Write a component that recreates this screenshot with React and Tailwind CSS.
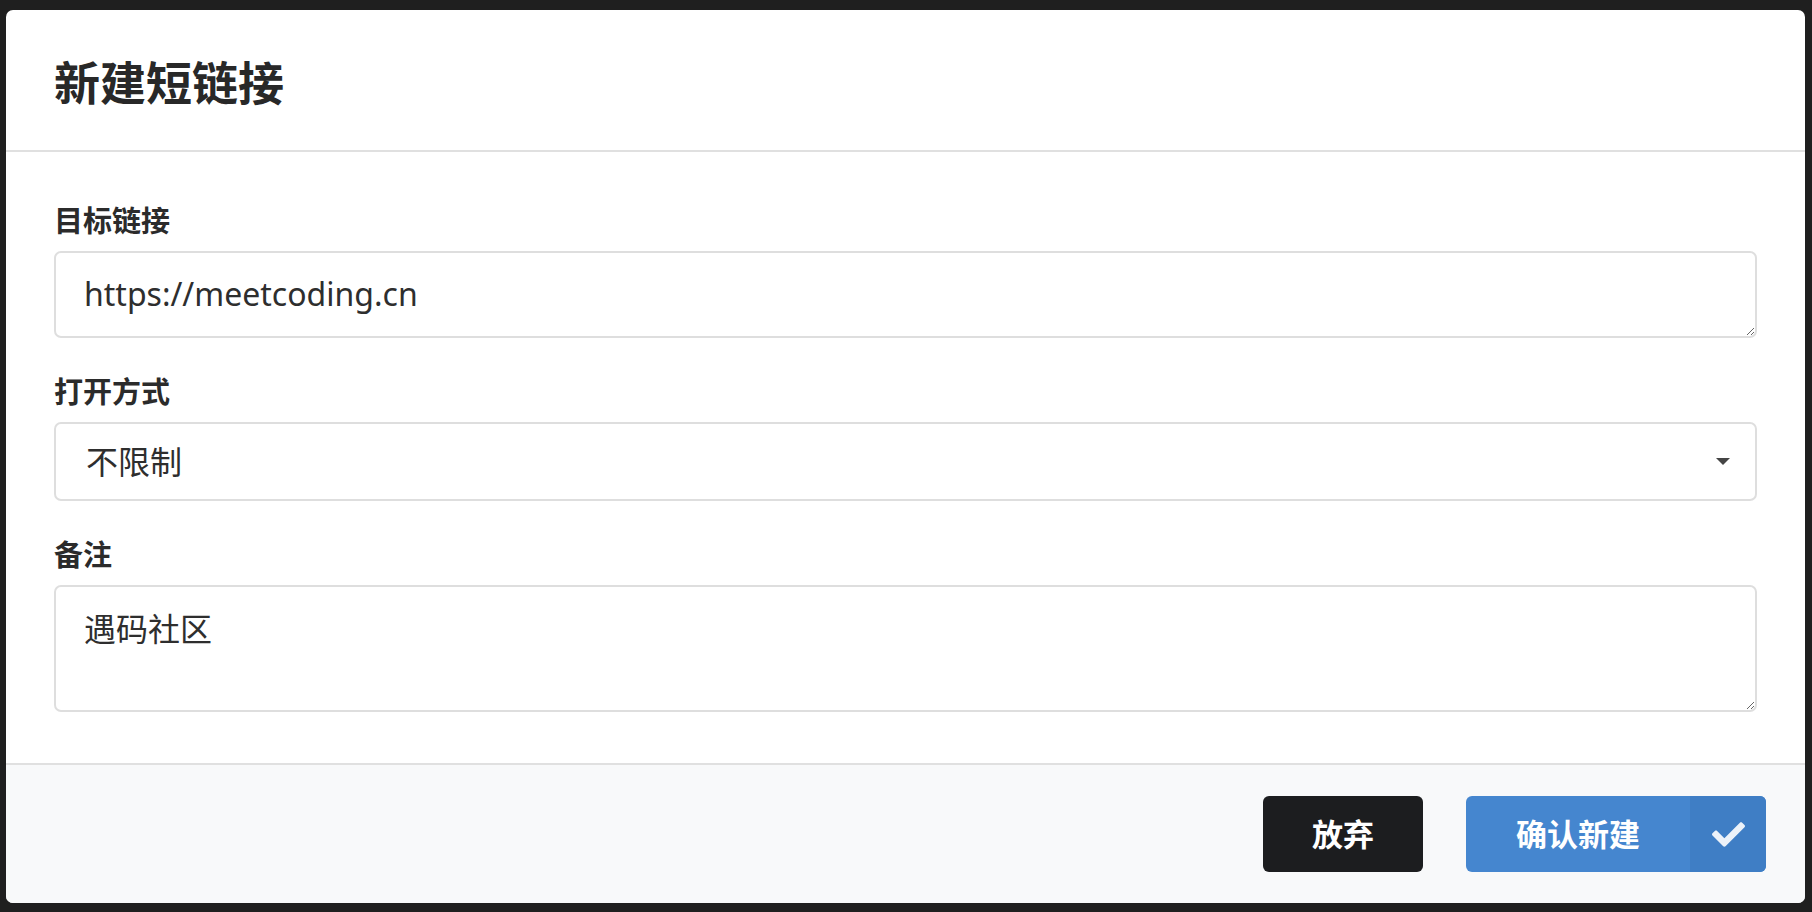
import { FaCheck } from "react-icons/fa";

function Field({ label, children, first }) {
  return (
    <div className={first ? "" : "mt-[32px]"}>
      <div className="text-[29px] leading-[44px] font-bold text-[#2b2b2b] mb-[8px]">{label}</div>
      {children}
    </div>
  );
}

export default function App() {
  return (
    <div className="h-[912px] w-full bg-[#1f1f1f] pl-[6px] pr-[7px] pt-[10px] pb-[9px] font-[family-name:'Noto_Sans','Noto_Sans_CJK_SC',sans-serif]">
      <div className="h-full bg-white rounded-[7px] overflow-hidden flex flex-col">
        <div className="h-[142px] shrink-0 flex items-center pl-[48px] border-b-2 border-[#e0e0e0]">
          <h1 className="text-[46px] font-bold text-[#282828] font-[family-name:'Noto_Sans_CJK_SC',sans-serif]">新建短链接</h1>
        </div>

        <div className="flex-1 px-[48px] pt-[47px]">
          <Field label="目标链接" first>
            <textarea
              defaultValue="https://meetcoding.cn"
              className="block w-full h-[87px] border-2 border-[#dedede] rounded-[7px] pl-[28px] pr-[20px] pt-[17px] text-[32px] leading-[48px] text-[#2e2e2e] outline-none"
            />
          </Field>

          <Field label="打开方式">
            <div className="h-[79px] border-2 border-[#dedede] rounded-[7px] pl-[30px] pr-[25px] flex items-center justify-between">
              <span className="text-[32px] text-[#2e2e2e]">不限制</span>
              <svg width="14" height="8" viewBox="0 0 14 8">
                <path d="M0 0h14L7 7z" fill="#444" />
              </svg>
            </div>
          </Field>

          <Field label="备注">
            <textarea
              defaultValue="遇码社区"
              className="block w-full h-[127px] border-2 border-[#dedede] rounded-[7px] pl-[28px] pr-[20px] pt-[18px] text-[32px] leading-[48px] text-[#2e2e2e] outline-none"
            />
          </Field>
        </div>

        <div className="h-[140px] shrink-0 bg-[#f8f9fa] border-t-2 border-[#e0e0e0] flex items-center justify-end gap-[43px] pr-[39px]">
          <button className="w-[160px] h-[76px] rounded-[6px] bg-[#1c1d1f] text-white text-[31px] font-bold">
            放弃
          </button>
          <button className="w-[300px] h-[76px] rounded-[6px] overflow-hidden bg-[#4586cf] flex text-white">
            <span className="flex-1 h-full flex items-center justify-center text-[31px] font-bold">确认新建</span>
            <span className="w-[76px] h-full bg-[#3f7ec5] flex items-center justify-center">
              <FaCheck size={33} className="text-white opacity-90" />
            </span>
          </button>
        </div>
      </div>
    </div>
  );
}
